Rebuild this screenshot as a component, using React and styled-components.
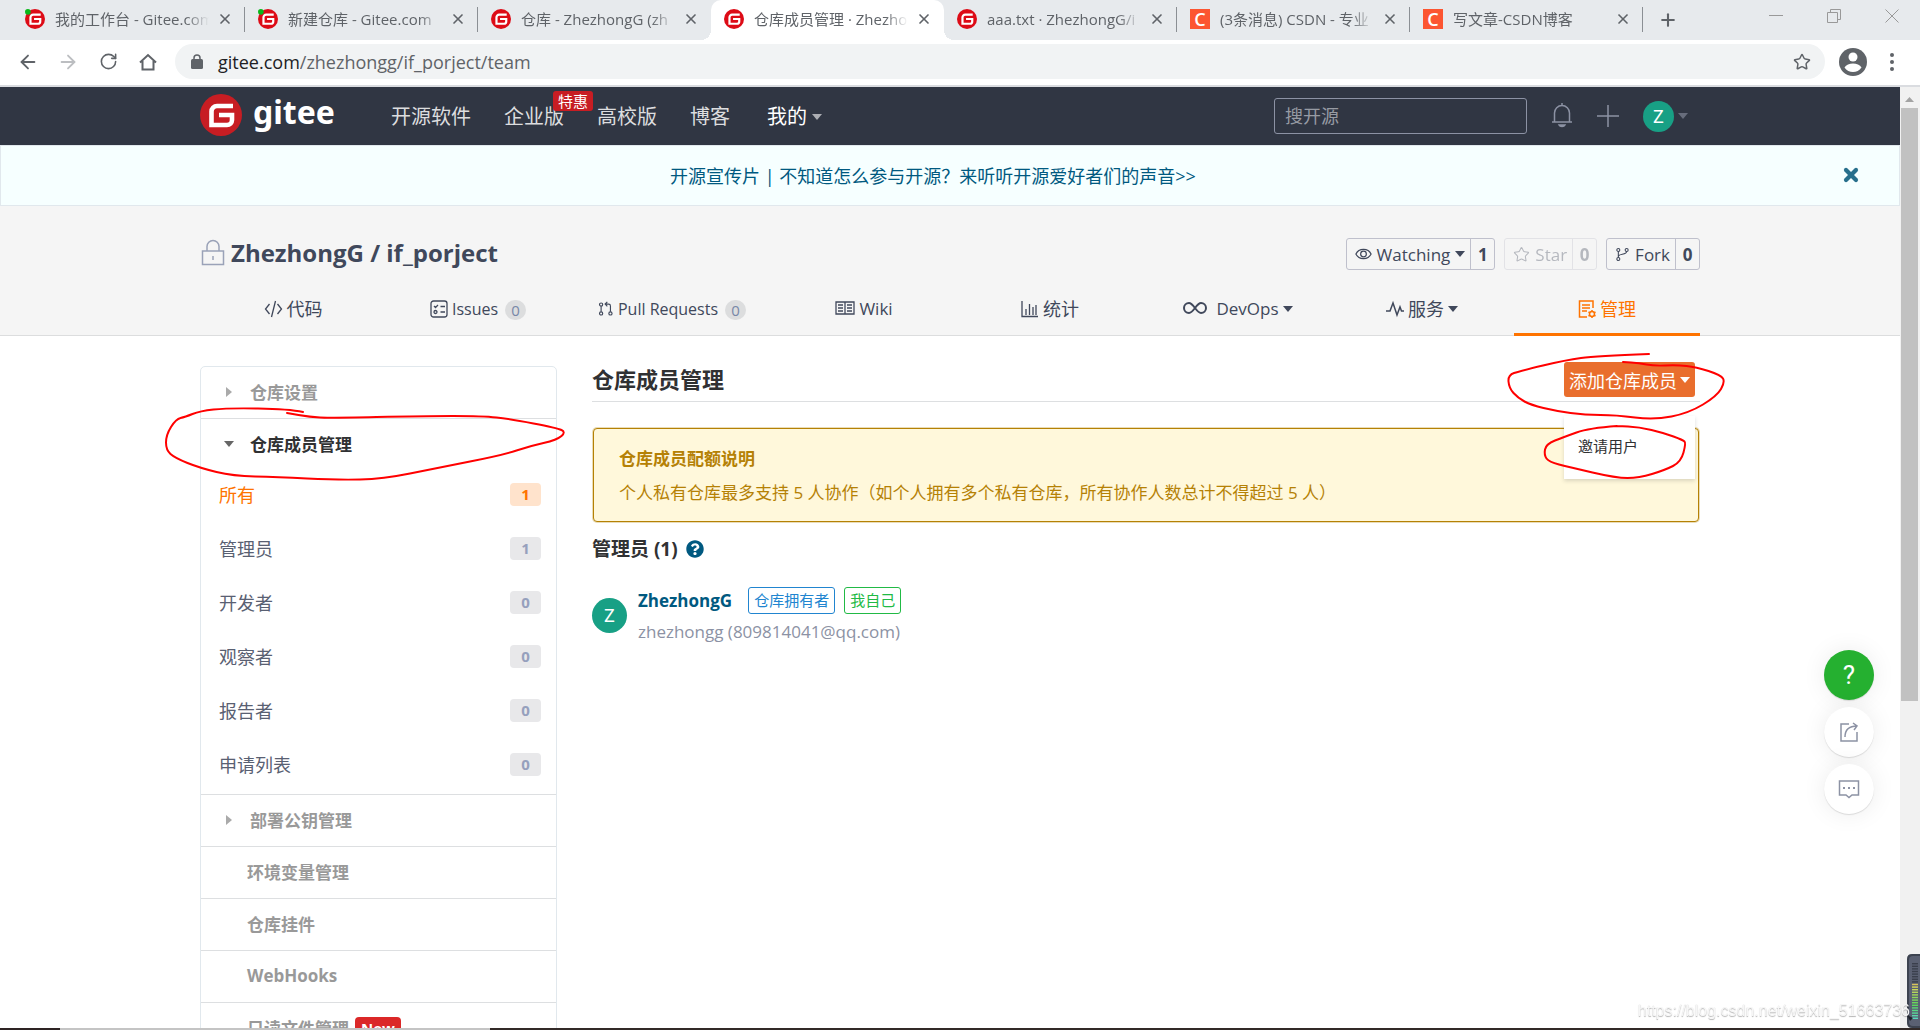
import React, { useState } from "react";
import styled, { createGlobalStyle, css } from "styled-components";
import { ArrowLeft, ArrowRight, Plus, RotateCw, Star, X } from "lucide-react";
import { FaQuestionCircle } from "react-icons/fa";

const GlobalStyle = createGlobalStyle`
  * {
    box-sizing: border-box;
  }

  body {
    margin: 0;
    overflow: hidden;
    font-family: "Open Sans", "Noto Sans CJK SC", sans-serif;
    font-size: 17px;
    color: #40485b;
    background-color: #fff;
  }

  button,
  input {
    font-family: inherit;
    color: inherit;
  }

  button {
    padding: 0;
    border: none;
    background: none;
    cursor: pointer;
  }

  a {
    color: inherit;
    text-decoration: none;
  }

  ul {
    margin: 0;
    padding: 0;
    list-style: none;
  }

  svg {
    flex: none;
  }
`;

const Window = styled.div`
  display: flex;
  flex-direction: column;
  height: 100vh;
`;

/* browser chrome */

const TabStrip = styled.div`
  display: flex;
  align-items: stretch;
  height: 40px;
  padding-left: 12px;
  background-color: #e7eaed;
`;

const Tab = styled.div`
  position: relative;
  display: flex;
  align-items: center;
  gap: 10px;
  flex: 0 1 233px;
  min-width: 0;
  padding: 0 14px 2px 13px;

  ${({ $divider }) =>
    $divider &&
    css`
      background: linear-gradient(#8b8f94, #8b8f94) right 7px / 1px 25px no-repeat;
    `}

  ${({ $active }) =>
    $active &&
    css`
      background-color: #fff;
      border-radius: 10px 10px 0 0;

      &::before,
      &::after {
        content: "";
        position: absolute;
        bottom: 0;
        width: 10px;
        height: 10px;
      }

      &::before {
        right: 100%;
        background: radial-gradient(circle at 0 0, transparent 10px, #fff 10px);
      }

      &::after {
        left: 100%;
        background: radial-gradient(circle at 100% 0, transparent 10px, #fff 10px);
      }
    `}
`;

const TabTitle = styled.button`
  flex: 1;
  min-width: 0;
  overflow: hidden;
  white-space: nowrap;
  text-align: left;
  font-size: 15px;
  line-height: 24px;
  color: #5f6368;
  mask-image: linear-gradient(to right, #000 85%, transparent);
`;

const IconButton = styled.button`
  display: flex;
  align-items: center;
  justify-content: center;
  width: ${({ $size }) => $size || 20}px;
  height: ${({ $size }) => $size || 20}px;
  color: ${({ $color }) => $color || "#5f6368"};
`;

const NewTab = styled(IconButton)`
  align-self: center;
  margin-left: 15px;
`;

const ProfileButton = styled(IconButton)`
  margin-right: -5px;
`;

const WindowControls = styled.div`
  display: flex;
  gap: 38px;
  margin: 6px 18px 0 auto;
`;

const CsdnIcon = styled.span`
  flex: none;
  width: 20px;
  height: 20px;
  background-color: #fc5531;
  color: #fff;
  font-size: 18px;
  font-weight: 600;
  line-height: 20px;
  text-align: center;
`;

const AddressBar = styled.div`
  display: flex;
  align-items: center;
  gap: 20px;
  height: 47px;
  padding: 0 18px 2px;
  border-bottom: 2px solid #dadce0;
`;

const Omnibox = styled.label`
  flex: 1;
  display: flex;
  align-items: center;
  height: 35px;
  margin: 0 -6px 0 -3px;
  padding: 0 14px 0 16px;
  border-radius: 18px;
  background-color: #f1f3f4;
  font-size: 18px;
  color: #202124;
`;

const Host = styled.span`
  margin-left: 15px;
`;

const PathInput = styled.input`
  flex: 1;
  padding: 0;
  border: none;
  outline: none;
  background: none;
  font-size: 18px;
  color: #5f6368;
`;

const Page = styled.div`
  flex: 1;
  display: flex;
  min-height: 0;
`;

const Viewport = styled.div`
  position: relative;
  flex: 1;
  min-width: 0;
  overflow: hidden;
`;

const Scrollbar = styled.div`
  display: flex;
  flex-direction: column;
  width: 20px;
  padding: 0 2px 0 1px;
  background-color: #f1f1f1;
`;

const ScrollUp = styled.div`
  flex: none;
  height: 21px;
  padding: 0 4px;
  line-height: 18px;
`;

const Thumb = styled.div`
  height: 63%;
  background-color: #c1c1c1;
`;

const BottomEdge = styled.div`
  height: 2px;
  background: linear-gradient(to right, #2e2424 60px, #c4c4c4 60px, #c4c4c4 490px, #332a28 490px);
`;

/* site header */

const Container = styled.div`
  position: relative;
  max-width: 1500px;
  margin: 0 auto;
`;

const SiteHeader = styled.header`
  background-color: #303643;
`;

const HeaderInner = styled(Container)`
  display: flex;
  align-items: center;
  height: 58px;
  padding-right: 12px;
`;

const Brand = styled.a`
  display: flex;
  align-items: center;
  gap: 11px;
  padding-bottom: 2px;
`;

const Wordmark = styled.span`
  font-family: "Noto Sans", sans-serif;
  font-size: 32px;
  font-weight: 700;
  line-height: 44px;
  margin-bottom: 6px;
  color: #fff;
`;

const SiteNav = styled.nav`
  display: flex;
  gap: 33px;
  margin-left: 56px;
  padding-top: 2px;
  font-size: 20px;
  line-height: 30px;
  color: #dcdddf;
`;

const NavLink = styled.a`
  position: relative;
  display: flex;
  align-items: center;
  gap: 5px;
  color: inherit;
`;

const MineLink = styled(NavLink)`
  margin-left: 4px;
  color: #fff;
`;

const PromoBadge = styled.span`
  position: absolute;
  left: 49px;
  top: -11px;
  padding: 0 5px;
  border-radius: 3px;
  background-color: #c71d23;
  color: #fff;
  font-size: 15px;
  line-height: 20px;
  white-space: nowrap;
`;

const Caret = styled.span`
  flex: none;
  border: 5px solid transparent;
  border-bottom: none;
  border-top: 6px solid currentColor;
  opacity: ${({ $dim }) => ($dim ? 0.6 : 1)};
`;

const HeaderTools = styled.div`
  display: flex;
  align-items: center;
  gap: 24px;
  margin-left: auto;
  color: #8c92a4;
`;

const SearchInput = styled.input`
  width: 253px;
  height: 36px;
  padding: 0 10px;
  border: 1px solid #8c92a4;
  border-radius: 3px;
  background: none;
  font-size: 18px;
  color: #fff;

  &::placeholder {
    color: #979ba3;
  }
`;

const AccountButton = styled.button`
  display: flex;
  align-items: center;
  gap: 4px;
  color: #8c92a4;
`;

const Avatar = styled.span`
  flex: none;
  width: ${({ $size }) => $size}px;
  height: ${({ $size }) => $size}px;
  border-radius: 50%;
  background-color: #18a085;
  color: #fff;
  font-family: Roboto, sans-serif;
  font-size: 18px;
  line-height: ${({ $size }) => $size}px;
  text-align: center;
`;

const Banner = styled.div`
  display: flex;
  align-items: center;
  height: 61px;
  padding: 0 38px 2px;
  border: 1px solid #e1e8ed;
  background-color: #f6ffff;
  color: #005980;
`;

const BannerLink = styled.a`
  flex: 1;
  padding-right: 14px;
  text-align: center;
  font-size: 18px;
`;

/* repository header */

const RepoHeader = styled.section`
  border-bottom: 1px solid #dcddde;
  background-color: #f5f5f5;
`;

const RepoTitleRow = styled.div`
  display: flex;
  align-items: center;
  gap: 9px;
  height: 94px;
  padding-top: 2px;
`;

const RepoTitle = styled.h2`
  display: flex;
  align-items: center;
  gap: 6px;
  flex: 1;
  margin: 0 0 2px;
  padding-left: 1px;
  font-size: 24px;
  font-weight: 700;
  line-height: 32px;
`;

const ActionGroup = styled.div`
  display: flex;
  height: 32px;
  border: 1px solid #bfc0cc;
  border-radius: 3px;
  opacity: ${({ $disabled }) => ($disabled ? 0.35 : 1)};
`;

const ActionButton = styled.button`
  display: flex;
  align-items: center;
  gap: 5px;
  padding: 0 5px 0 8px;
  font-size: 17px;
`;

const ActionCount = styled.a`
  min-width: 24px;
  border-left: 1px solid #bfc0cc;
  font-weight: 700;
  line-height: 32px;
  text-align: center;
`;

const RepoTabs = styled.nav`
  display: grid;
  grid-template-columns: 186fr 184fr 204fr 180fr 192fr 184fr 184fr 186fr;
  height: 35px;
`;

const RepoTab = styled.a`
  display: flex;
  justify-content: center;
  gap: ${({ $wide }) => ($wide ? 9 : 4)}px;
  height: 36px;
  font-size: ${({ $size }) => $size || 17}px;
  line-height: 18px;
  color: ${({ $active }) => ($active ? "#fe7300" : "inherit")};
  border-bottom: 3px solid ${({ $active }) => ($active ? "#fe7300" : "transparent")};

  ${Caret} {
    margin-top: 6px;
    margin-left: ${({ $wide }) => ($wide ? -5 : 0)}px;
  }
`;

const CountBubble = styled.span`
  width: 21px;
  height: 20px;
  margin-left: 3px;
  border-radius: 10px;
  background-color: #dcddde;
  color: #7887a8;
  font-size: 15px;
  line-height: 20px;
  text-align: center;
`;

/* sidebar */

const Content = styled(Container)`
  display: flex;
  align-items: flex-start;
  gap: 35px;
`;

const Sidebar = styled.aside`
  flex: 0 0 357px;
  margin-top: 30px;
  border: 1px solid #e1e8ed;
  border-radius: 5px;
`;

const MenuHeading = styled.a`
  display: flex;
  align-items: center;
  height: ${({ $open }) => ($open ? 51 : 52)}px;
  padding-bottom: 2px;
  padding-left: ${({ $plain }) => ($plain ? 46 : 25)}px;
  border-bottom: ${({ $open }) => ($open ? "none" : "1px solid #dddfe1")};
  font-weight: 700;
  color: ${({ $open }) => ($open ? "#303133" : "#999")};
`;

const Arrow = styled.span`
  flex: none;
  margin-right: ${({ $open }) => ($open ? 16 : 18)}px;
  margin-left: ${({ $open }) => ($open ? -2 : 0)}px;
  border: 5px solid transparent;
  ${({ $open }) =>
    $open
      ? "border-top: 6px solid #666; border-bottom: none;"
      : "border-left: 6px solid #aaa; border-right: none;"}
`;

const SubMenu = styled.ul`
  border-bottom: 1px solid #dddfe1;
`;

const SubItem = styled.a`
  display: flex;
  align-items: center;
  justify-content: space-between;
  height: 54px;
  padding: 0 15px 6px 18px;
  font-size: 18px;
  color: ${({ $active }) => ($active ? "#fe7300" : "#596072")};
`;

const SubCount = styled.span`
  width: 31px;
  height: 23px;
  border-radius: 4px;
  background-color: ${({ $active }) => ($active ? "#ffe3cc" : "#e8e8ea")};
  color: ${({ $active }) => ($active ? "#fe7300" : "#96a0bd")};
  font-size: 15px;
  font-weight: 700;
  line-height: 23px;
  text-align: center;
`;

const NewTag = styled.span`
  margin-left: 6px;
  padding: 0 6px;
  border-radius: 4px;
  background-color: #db2828;
  color: #fff;
  font-size: 15px;
  line-height: 22px;
`;

/* members */

const Members = styled.main`
  flex: 1;
  min-width: 0;
  padding-top: 26px;
  color: #303133;
`;

const MembersHead = styled.div`
  display: flex;
  align-items: center;
  justify-content: space-between;
  padding: 0 5px 4px 0;
  border-bottom: 1px solid #dddfe1;
`;

const Title = styled.h3`
  margin: 0;
  font-size: 22px;
  font-weight: 700;
  line-height: 35px;
`;

const Dropdown = styled.div`
  position: relative;
`;

const AddButton = styled.button`
  display: flex;
  align-items: center;
  gap: 3px;
  height: 35px;
  padding: 0 5px;
  border-radius: 3px;
  background-color: #e96e2d;
  color: #fff;
  font-size: 18px;
`;

const DropdownMenu = styled.div`
  position: absolute;
  top: 54px;
  left: 0;
  right: 0;
  height: 63px;
  padding: 16px 14px;
  background-color: #fff;
  box-shadow: 0 2px 4px rgba(34, 36, 38, 0.16);
  font-size: 15px;
  line-height: 28px;
`;

const Alert = styled.div`
  margin: 26px 1px 0;
  padding: 13px 25px 11px;
  border: 1px solid #b58105;
  border-radius: 4px;
  background-color: #fff8db;
  box-shadow: 0 0 0 1px #e9dcb8;
  color: #b58105;
  line-height: 34px;
`;

const AlertText = styled.p`
  margin: 0;
  font-weight: ${({ $strong }) => ($strong ? 700 : 400)};
`;

const GroupTitle = styled.h4`
  display: flex;
  align-items: center;
  gap: 8px;
  margin: 13px 0 24px;
  font-size: 19px;
  font-weight: 700;
  line-height: 28px;
`;

const Member = styled.div`
  display: flex;
  gap: 11px;

  ${Avatar} {
    margin-top: 11px;
  }
`;

const NameRow = styled.div`
  display: flex;
  align-items: center;
  gap: 9px;
  height: 27px;
  margin-bottom: 4px;
`;

const MemberName = styled.a`
  margin-right: 7px;
  font-weight: 700;
  color: #005980;
`;

const Role = styled.span`
  padding: 0 5px;
  border: 1px solid ${({ $color }) => $color};
  border-radius: 3px;
  color: ${({ $color }) => $color};
  font-size: 15px;
  line-height: 25px;
`;

const Email = styled.div`
  line-height: 28px;
  color: #8c92a4;
`;

/* overlays */

const Marks = styled.svg`
  position: absolute;
  top: 0;
  left: 0;
  overflow: visible;
  pointer-events: none;
`;

const SideTools = styled.div`
  position: absolute;
  right: 26px;
  bottom: 214px;
  display: flex;
  flex-direction: column;
  gap: 7px;
`;

const RoundButton = styled.button`
  display: flex;
  align-items: center;
  justify-content: center;
  width: 50px;
  height: 50px;
  border-radius: 50%;
  background-color: ${({ $green }) => ($green ? "#25b030" : "#fff")};
  color: ${({ $green }) => ($green ? "#fff" : "#8c92a4")};
  box-shadow: 0 1px 1px rgba(0, 0, 0, 0.12), 0 0 24px rgba(0, 0, 0, 0.08);
  font-family: Roboto, sans-serif;
  font-size: 26px;
`;

const Watermark = styled.div`
  position: fixed;
  right: 10px;
  bottom: 9px;
  font-family: "Liberation Sans", sans-serif;
  font-size: 16px;
  line-height: 20px;
  color: #f6f6f6;
  text-shadow: 0 1px 1px rgba(0, 0, 0, 0.3);
`;

const Meter = styled.svg`
  position: fixed;
  right: 0;
  bottom: 2px;
`;

const GiteeLogo = ({ size, dot }) => (
  <svg width={size} height={size} viewBox="0 0 42 42" aria-hidden="true">
    <circle cx="21" cy="21" r="21" fill={size > 30 ? "#c71d23" : "#dd0b16"} />
    <path
      d="M33 12H17a5.500 5.500 0 0 0-5.500 5.500V31H27a5 5 0 0 0 5-5v-5H19"
      fill="none"
      stroke="#fff"
      strokeWidth="4.600"
    />
    {dot && <circle cx="6" cy="6" r="6" fill="#0ab81b" />}
  </svg>
);

const Icon = ({ width = 18, height = 18, box = "0 0 18 18", stroke = 1.3, children }) => (
  <svg
    width={width}
    height={height}
    viewBox={box}
    fill="none"
    stroke="currentColor"
    strokeWidth={stroke}
    aria-hidden="true"
  >
    {children}
  </svg>
);

const HomeIcon = () => (
  <Icon width={20} height={20} box="0 0 20 20" stroke={2}>
    <path d="M2 10.500 10 3l8 7.500M4.500 9v8.500h11V9" />
  </Icon>
);

const CodeIcon = () => (
  <Icon width={19}>
    <path d="M5 4 1 9l4 5M13 4l4 5-4 5M11 1 7 17" />
  </Icon>
);

const IssuesIcon = () => (
  <Icon>
    <rect x="1" y="1" width="16" height="16" rx="2.500" />
    <path d="M4 6l1.500 1.500L8 5M10.500 6.500H15M10.500 12H15" />
    <circle cx="5.500" cy="12" r="1.500" />
  </Icon>
);

const PullIcon = () => (
  <Icon width={16}>
    <circle cx="3.500" cy="4" r="1.800" />
    <circle cx="3.500" cy="14" r="1.800" />
    <circle cx="14" cy="14" r="1.800" />
    <path d="M3.500 6v6M14 12V5.500a2 2 0 0 0-2-2H8.500M10.500 1 8 3.500 10.500 6" />
  </Icon>
);

const WikiIcon = () => (
  <Icon width={20} height={16} box="0 0 20 16">
    <path d="M1 2h18v12H1zM10 2v12M3 5h5M3 8h5M3 11h5M12 5h5M12 8h5M12 11h5" />
  </Icon>
);

const StatsIcon = () => (
  <Icon>
    <path d="M1 1v15.500h16M5 15V9M8.500 15V4M12 15V7M15 15V5" />
  </Icon>
);

const DevOpsIcon = () => (
  <Icon width={24} height={16} box="0 0 24 16" stroke={2}>
    <path d="M12 8C9 4 8 3 6 3a5 5 0 0 0 0 10c2 0 3-1 6-5s4-5 6-5a5 5 0 0 1 0 10c-2 0-3-1-6-5z" />
  </Icon>
);

const ServiceIcon = () => (
  <Icon stroke={1.5}>
    <path d="M0 11h4l3-8 4 12 3-8 1.500 4H18" />
  </Icon>
);

const ManageIcon = () => (
  <Icon stroke={1.5}>
    <path d="M15 8V1H1.500v16H9M4 5h8M4 8h8M4 11h5" />
    <circle cx="14" cy="14" r="2.500" />
    <path d="M14 10v1.500M14 16.500V18M10.500 12l1.500.800M16 15.200l1.500.800M10.500 16l1.500-.800M16 12.800l1.500-.800" />
  </Icon>
);

const EyeIcon = () => (
  <Icon width={17}>
    <path d="M1 9c3-6.500 13-6.500 16 0-3 6.500-13 6.500-16 0z" />
    <circle cx="9" cy="9" r="3" />
  </Icon>
);

const ForkIcon = () => (
  <Icon width={15} height={17}>
    <circle cx="4" cy="3.500" r="1.800" />
    <circle cx="4" cy="14.500" r="1.800" />
    <circle cx="14" cy="3.500" r="1.800" />
    <path d="M4 5.500v7M14 5.500c0 4.500-10 2-10 6" />
  </Icon>
);

const LockIcon = () => (
  <Icon width={24} height={28} box="0 0 24 28" stroke={1.5}>
    <g stroke="#9aa2b8">
      <path d="M1.500 12h21v13.500h-21zM6 12V7.500a6 6 0 0 1 12 0V12M12 17v4" />
    </g>
  </Icon>
);

const BellIcon = () => (
  <Icon width={22} height={26} box="0 0 22 26" stroke={1.5}>
    <path d="M1 19h20M3.500 19v-9a7.500 7.500 0 0 1 15 0v9M11 2.500V0M8 22c1 2 5 2 6 0z" />
  </Icon>
);

const ShareIcon = () => (
  <Icon width={20} height={20} box="0 0 20 20" stroke={1.5}>
    <path d="M10 2H2v17h16v-9M6 15c0-7 4-11 12-11M14 1l4 3-3 4" />
  </Icon>
);

const ChatIcon = () => (
  <Icon width={22} height={20} box="0 0 22 20" stroke={1.5}>
    <path d="M1.500 2h19v14H14l-3 2.500L8 16H1.500z" />
    <path d="M5 9h2M10 9h2M15 9h2" strokeWidth="2" />
  </Icon>
);

const tabs = [
  { title: "我的工作台 - Gitee.com", icon: "dot", divider: true },
  { title: "新建仓库 - Gitee.com", icon: "dot", divider: true },
  { title: "仓库 - ZhezhongG (zh", icon: "gitee" },
  { title: "仓库成员管理 · Zhezho", icon: "gitee", active: true },
  { title: "aaa.txt · ZhezhongG/i", icon: "gitee", divider: true },
  { title: "(3条消息) CSDN - 专业", icon: "csdn", divider: true },
  { title: "写文章-CSDN博客", icon: "csdn", divider: true },
];

const roles = [
  ["所有", 1],
  ["管理员", 1],
  ["开发者", 0],
  ["观察者", 0],
  ["报告者", 0],
  ["申请列表", 0],
];

const strokes = [
  [[303, 412], [289, 409], [227, 408], [200, 411], [185, 417], [176, 419], [166, 435], [166, 450], [175, 458], [200, 468], [233, 476], [277, 477], [337, 480], [383, 479], [437, 468], [503, 455], [530, 446], [557, 440], [566, 432], [557, 428], [510, 419], [483, 416], [423, 416], [330, 418], [310, 417], [287, 413]],
  [[1649, 354], [1596, 356], [1566, 360], [1520, 371], [1508, 375], [1509, 388], [1518, 398], [1531, 405], [1556, 411], [1585, 415], [1616, 415], [1654, 420], [1689, 413], [1717, 396], [1725, 382], [1721, 375], [1696, 367], [1677, 365], [1654, 366], [1639, 363], [1623, 362]],
  [[1617, 426], [1589, 428], [1564, 437], [1546, 444], [1544, 455], [1549, 462], [1569, 467], [1616, 478], [1639, 478], [1665, 470], [1681, 462], [1686, 443], [1683, 440], [1664, 433], [1639, 427], [1617, 426]],
];

// Rounds off a hand-drawn polyline by curving through the midpoints
const smooth = (points) => {
  const curves = points.slice(1, -1).map(([x, y], i) => {
    const [nextX, nextY] = points[i + 2];
    return `Q${x} ${y} ${(x + nextX) / 2} ${(y + nextY) / 2}`;
  });

  return `M${points[0].join(" ")} ${curves.join(" ")} L${points[points.length - 1].join(" ")}`;
};

const BrowserBar = () => {
  const [path, setPath] = useState("/zhezhongg/if_porject/team");

  return (
    <>
      <TabStrip>
        {tabs.map((tab) => (
          <Tab key={tab.title} $active={tab.active} $divider={tab.divider}>
            {tab.icon === "csdn" ? (
              <CsdnIcon>C</CsdnIcon>
            ) : (
              <GiteeLogo size={20} dot={tab.icon === "dot"} />
            )}
            <TabTitle>{tab.title}</TabTitle>
            <IconButton $size={12} aria-label="关闭标签页">
              <X size={16} strokeWidth={2.5} />
            </IconButton>
          </Tab>
        ))}
        <NewTab aria-label="新标签页">
          <Plus size={20} strokeWidth={2.5} />
        </NewTab>
        <WindowControls>
          <IconButton $color="#999" aria-label="最小化">
            <Icon width={14} height={14} box="0 0 14 14" stroke={1}>
              <path d="M0 6.500h14" />
            </Icon>
          </IconButton>
          <IconButton $color="#999" aria-label="还原">
            <Icon width={14} height={14} box="0 0 14 14" stroke={1}>
              <path d="M.5 3.500h10v10H.5zM3.500 3.500v-3h10v10h-3" />
            </Icon>
          </IconButton>
          <IconButton $color="#999" aria-label="关闭">
            <Icon width={14} height={14} box="0 0 14 14" stroke={1}>
              <path d="M.5.5l13 13M13.500.5l-13 13" />
            </Icon>
          </IconButton>
        </WindowControls>
      </TabStrip>

      <AddressBar>
        <IconButton aria-label="后退">
          <ArrowLeft size={22} />
        </IconButton>
        <IconButton $color="#bcbec1" aria-label="前进">
          <ArrowRight size={22} />
        </IconButton>
        <IconButton aria-label="刷新">
          <RotateCw size={19} />
        </IconButton>
        <IconButton aria-label="主页">
          <HomeIcon />
        </IconButton>
        <Omnibox>
          <svg width="12" height="15" viewBox="0 0 12 15" aria-hidden="true">
            <rect y="5" width="12" height="10" rx="1.500" fill="#5f6368" />
            <path d="M3 6V4a3 3 0 0 1 6 0v2" fill="none" stroke="#5f6368" strokeWidth="1.500" />
          </svg>
          <Host>gitee.com</Host>
          <PathInput aria-label="地址" value={path} onChange={(e) => setPath(e.target.value)} />
          <Star size={18} color="#5f6368" />
        </Omnibox>
        <ProfileButton $size={28} aria-label="用户">
          <svg width="28" height="28" viewBox="0 0 28 28">
            <circle cx="14" cy="14" r="14" fill="#5f6368" />
            <circle cx="14" cy="9" r="4.500" fill="#fff" />
            <path d="M5.500 19.500c3-5.500 14-5.500 17 0-4 6-13 6-17 0z" fill="#fff" />
          </svg>
        </ProfileButton>
        <IconButton aria-label="更多">
          <svg width="4" height="18" viewBox="0 0 4 18" fill="currentColor">
            <circle cx="2" cy="2" r="2" />
            <circle cx="2" cy="9" r="2" />
            <circle cx="2" cy="16" r="2" />
          </svg>
        </IconButton>
      </AddressBar>
    </>
  );
};

const Header = () => (
  <SiteHeader>
    <HeaderInner>
      <Brand href="#">
        <GiteeLogo size={42} />
        <Wordmark>gitee</Wordmark>
      </Brand>
      <SiteNav>
        <NavLink href="#">开源软件</NavLink>
        <NavLink href="#">
          企业版
          <PromoBadge>特惠</PromoBadge>
        </NavLink>
        <NavLink href="#">高校版</NavLink>
        <NavLink href="#">博客</NavLink>
        <MineLink href="#">
          我的
          <Caret $dim />
        </MineLink>
      </SiteNav>
      <HeaderTools>
        <SearchInput type="text" aria-label="搜开源" placeholder="搜开源" />
        <IconButton $size={22} $color="#8c92a4" aria-label="通知">
          <BellIcon />
        </IconButton>
        <IconButton $size={22} $color="#8c92a4" aria-label="新建">
          <Icon width={22} height={22} box="0 0 22 22" stroke={1.5}>
            <path d="M0 11h22M11 0v22" />
          </Icon>
        </IconButton>
        <AccountButton>
          <Avatar $size={31}>Z</Avatar>
          <Caret $dim />
        </AccountButton>
      </HeaderTools>
    </HeaderInner>
  </SiteHeader>
);

const Repo = () => (
  <RepoHeader>
    <Container>
      <RepoTitleRow>
        <RepoTitle>
          <LockIcon />
          <a href="#">ZhezhongG / if_porject</a>
        </RepoTitle>
        <ActionGroup>
          <ActionButton>
            <EyeIcon />
            Watching
            <Caret />
          </ActionButton>
          <ActionCount href="#">1</ActionCount>
        </ActionGroup>
        <ActionGroup $disabled>
          <ActionButton disabled>
            <Star size={17} strokeWidth={1.5} />
            Star
          </ActionButton>
          <ActionCount href="#">0</ActionCount>
        </ActionGroup>
        <ActionGroup>
          <ActionButton>
            <ForkIcon />
            Fork
          </ActionButton>
          <ActionCount href="#">0</ActionCount>
        </ActionGroup>
      </RepoTitleRow>
      <RepoTabs>
        <RepoTab href="#" $size={18}>
          <CodeIcon />
          代码
        </RepoTab>
        <RepoTab href="#" $size={16}>
          <IssuesIcon />
          Issues
          <CountBubble>0</CountBubble>
        </RepoTab>
        <RepoTab href="#" $size={16}>
          <PullIcon />
          Pull Requests
          <CountBubble>0</CountBubble>
        </RepoTab>
        <RepoTab href="#">
          <WikiIcon />
          Wiki
        </RepoTab>
        <RepoTab href="#" $size={18}>
          <StatsIcon />
          统计
        </RepoTab>
        <RepoTab href="#" $wide>
          <DevOpsIcon />
          DevOps
          <Caret />
        </RepoTab>
        <RepoTab href="#" $size={18}>
          <ServiceIcon />
          服务
          <Caret />
        </RepoTab>
        <RepoTab href="#" $size={18} $active>
          <ManageIcon />
          管理
        </RepoTab>
      </RepoTabs>
    </Container>
  </RepoHeader>
);

const Menu = () => (
  <Sidebar>
    <MenuHeading href="#">
      <Arrow />
      仓库设置
    </MenuHeading>
    <MenuHeading href="#" $open>
      <Arrow $open />
      仓库成员管理
    </MenuHeading>
    <SubMenu>
      {roles.map(([name, count], index) => (
        <li key={name}>
          <SubItem href="#" $active={index === 0}>
            {name}
            <SubCount $active={index === 0}>{count}</SubCount>
          </SubItem>
        </li>
      ))}
    </SubMenu>
    <MenuHeading href="#">
      <Arrow />
      部署公钥管理
    </MenuHeading>
    <MenuHeading href="#" $plain>环境变量管理</MenuHeading>
    <MenuHeading href="#" $plain>仓库挂件</MenuHeading>
    <MenuHeading href="#" $plain>WebHooks</MenuHeading>
    <MenuHeading href="#" $plain>
      只读文件管理
      <NewTag>New</NewTag>
    </MenuHeading>
  </Sidebar>
);

const MemberPanel = () => (
  <Members>
    <MembersHead>
      <Title>仓库成员管理</Title>
      <Dropdown>
        <AddButton>
          添加仓库成员
          <Caret />
        </AddButton>
        <DropdownMenu>
          <a href="#">邀请用户</a>
        </DropdownMenu>
      </Dropdown>
    </MembersHead>
    <Alert>
      <AlertText $strong>仓库成员配额说明</AlertText>
      <AlertText>
        个人私有仓库最多支持 5 人协作（如个人拥有多个私有仓库，所有协作人数总计不得超过 5 人）
      </AlertText>
    </Alert>
    <GroupTitle>
      管理员 (1)
      <FaQuestionCircle size={18} color="#005980" />
    </GroupTitle>
    <Member>
      <Avatar $size={35}>Z</Avatar>
      <div>
        <NameRow>
          <MemberName href="#">ZhezhongG</MemberName>
          <Role $color="#2185d0">仓库拥有者</Role>
          <Role $color="#21ba45">我自己</Role>
        </NameRow>
        <Email>zhezhongg (809814041@qq.com)</Email>
      </div>
    </Member>
  </Members>
);

const LevelMeter = () => (
  <Meter width="13" height="74" viewBox="0 0 13 74" aria-hidden="true">
    <path d="M13 0H5Q0 0 0 5V69Q0 74 5 74H13z" fill="#3d4350" />
    <path d="M13 2H6Q2 2 2 6V68Q2 72 6 72H13z" fill="#5a6072" />
    {Array.from({ length: 22 }, (_, i) => (
      <rect
        key={i}
        x="5"
        y={9 + i * 2.6}
        width="6"
        height="1.400"
        fill={i < 8 ? "#3a3f4c" : `hsl(${50 + (i - 8) * 9}, 62%, 60%)`}
      />
    ))}
    <path d="M0 61l6 3-3 3z" fill="#20242c" />
  </Meter>
);

const App = () => {
  const [showBanner, setShowBanner] = useState(true);

  return (
    <Window>
      <GlobalStyle />
      <BrowserBar />
      <Page>
        <Viewport>
          <Header />
          {showBanner && (
            <Banner>
              <BannerLink href="#">
                开源宣传片 | 不知道怎么参与开源？来听听开源爱好者们的声音&gt;&gt;
              </BannerLink>
              <IconButton $color="#276f8c" aria-label="关闭" onClick={() => setShowBanner(false)}>
                <X size={20} strokeWidth={5} />
              </IconButton>
            </Banner>
          )}
          <Repo />
          <Content>
            <Menu />
            <MemberPanel />
            <Marks width="1500" height="660" viewBox="200 336 1500 660" aria-hidden="true">
              {strokes.map((points, index) => (
                <path
                  key={index}
                  d={smooth(points)}
                  fill="none"
                  stroke="#f00"
                  strokeWidth="2"
                  strokeLinecap="round"
                />
              ))}
            </Marks>
          </Content>
          <SideTools>
            <RoundButton $green aria-label="帮助">?</RoundButton>
            <RoundButton aria-label="分享">
              <ShareIcon />
            </RoundButton>
            <RoundButton aria-label="反馈">
              <ChatIcon />
            </RoundButton>
          </SideTools>
        </Viewport>
        <Scrollbar>
          <ScrollUp>
            <svg width="9" height="5" viewBox="0 0 9 5" aria-hidden="true">
              <path d="M0 5 4.500 0 9 5z" fill="#a3a3a3" />
            </svg>
          </ScrollUp>
          <Thumb />
        </Scrollbar>
      </Page>
      <BottomEdge />
      <LevelMeter />
      <Watermark>https://blog.csdn.net/weixin_51663736</Watermark>
    </Window>
  );
};

export default App;
